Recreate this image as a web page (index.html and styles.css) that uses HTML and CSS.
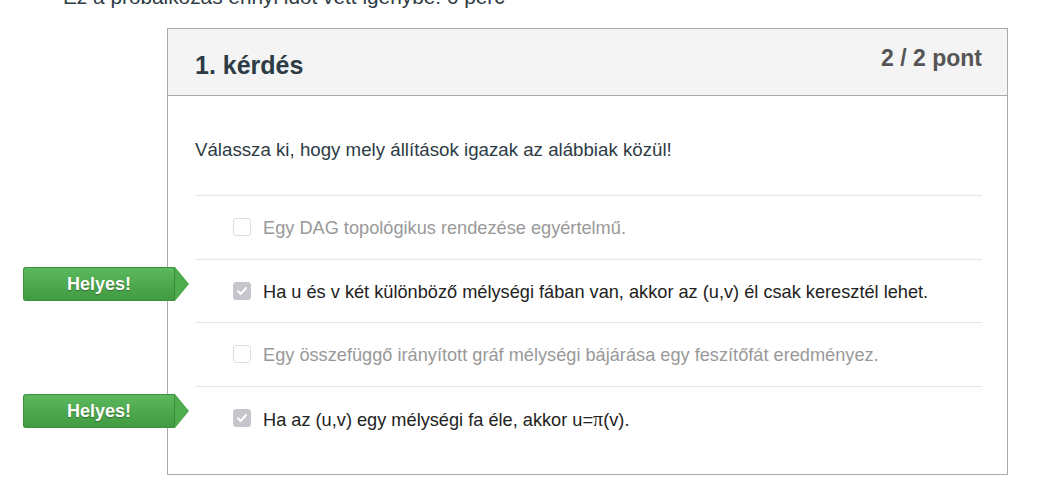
FILE: index.html
```html
<!DOCTYPE html>
<html lang="hu">
<head>
<meta charset="utf-8">
<link rel="stylesheet" href="styles.css">
</head>
<body>
<p class="attempt-time">Ez a próbálkozás ennyi időt vett igénybe: 6 perc</p>
<div class="card">
  <div class="card-header">
    <h2 class="q-title">1. kérdés</h2>
    <span class="q-points">2 / 2 pont</span>
  </div>
  <div class="card-body">
    <p class="q-text">Válassza ki, hogy mely állítások igazak az alábbiak közül!</p>
    <ul class="answers">
      <li class="answer">
        <span class="cb"></span>
        <span class="a-text muted">Egy DAG topológikus rendezése egyértelmű.</span>
      </li>
      <li class="answer">
        <span class="badge">Helyes!</span>
        <span class="cb checked"><svg viewBox="0 0 18 18" width="18" height="18"><path d="M4.5 9.3 L7.6 12.3 L13.6 5.6" fill="none" stroke="#fff" stroke-width="2.2" stroke-linecap="round" stroke-linejoin="round"/></svg></span>
        <span class="a-text">Ha u és v két különböző mélységi fában van, akkor az (u,v) él csak keresztél lehet.</span>
      </li>
      <li class="answer">
        <span class="cb"></span>
        <span class="a-text muted">Egy összefüggő irányított gráf mélységi bájárása egy feszítőfát eredményez.</span>
      </li>
      <li class="answer">
        <span class="badge">Helyes!</span>
        <span class="cb checked"><svg viewBox="0 0 18 18" width="18" height="18"><path d="M4.5 9.3 L7.6 12.3 L13.6 5.6" fill="none" stroke="#fff" stroke-width="2.2" stroke-linecap="round" stroke-linejoin="round"/></svg></span>
        <span class="a-text">Ha az (u,v) egy mélységi fa éle, akkor u=<span class="pi">π</span>(v).</span>
      </li>
    </ul>
  </div>
</div>
</body>
</html>
```

FILE: styles.css
```css
* { box-sizing: border-box; }
html, body { margin: 0; padding: 0; background: #fff; }
body {
  font-family: "Liberation Sans", Arial, sans-serif;
  color: #2d3b45;
  width: 1038px;
  height: 497px;
  overflow: hidden;
}
.attempt-time {
  margin: -15px 0 0 63px;
  font-size: 20.8px;
  line-height: 24px;
  color: #2d3b45;
  height: 24px;
}
.card {
  margin: 19px 0 0 167px;
  width: 841px;
  height: 447px;
  border: 1px solid #aaa;
}
.card-header {
  height: 67px;
  background: #f4f4f4;
  border-bottom: 1px solid #aaa;
  display: flex;
  justify-content: space-between;
  align-items: flex-start;
  padding: 0 25px 0 27px;
}
.q-title {
  margin: 21px 0 0 0;
  font-size: 25px;
  line-height: 30px;
  font-weight: bold;
  color: #2d3b45;
}
.q-points {
  margin-top: 16px;
  font-size: 23px;
  line-height: 26px;
  font-weight: bold;
  color: #555;
}
.card-body {
  padding: 0 25px 0 27px;
}
.q-text {
  margin: 0;
  padding: 41px 0 32px;
  font-size: 18.7px;
  line-height: 26px;
  color: #2d3b45;
  border-bottom: 1px solid #e6e6e6;
}
.answers {
  list-style: none;
  margin: 0;
  padding: 0;
}
.answer {
  position: relative;
  height: 63.5px;
  display: flex;
  align-items: center;
  padding-left: 38px;
  border-bottom: 1px solid #e6e6e6;
}
.answer:last-child { border-bottom: none; }
.cb {
  width: 18px;
  height: 18px;
  border: 1px solid #ddd;
  border-radius: 3px;
  background: #fff;
  flex: none;
  display: flex;
  align-items: center;
  justify-content: center;
}
.cb.checked {
  background: #c5c6cc;
  border-color: #c5c6cc;
}
.cb svg { display: block; }
.a-text {
  margin-left: 12px;
  padding-top: 2px;
  font-size: 18.2px;
  line-height: 22px;
  color: #222;
}
.a-text.muted { color: #999; }
.pi { font-family: "Liberation Serif", "DejaVu Serif", serif; font-size: 20px; }
.badge {
  position: absolute;
  left: -172px;
  top: 7px;
  width: 152px;
  height: 34px;
  background: linear-gradient(#5cb85c, #419b41);
  border: 1px solid #3c8f3c;
  border-right: 1px solid #3a8a3a;
  border-radius: 3px 0 0 3px;
  color: #fff;
  font-weight: bold;
  font-size: 18px;
  line-height: 32px;
  text-align: center;
  text-shadow: 0 1px 1px rgba(0,0,0,0.35);
}
.badge::after {
  content: "";
  position: absolute;
  right: -15px;
  top: -1px;
  width: 0;
  height: 0;
  border-top: 17px solid transparent;
  border-bottom: 17px solid transparent;
  border-left: 14px solid #4eab4e;
}
```
